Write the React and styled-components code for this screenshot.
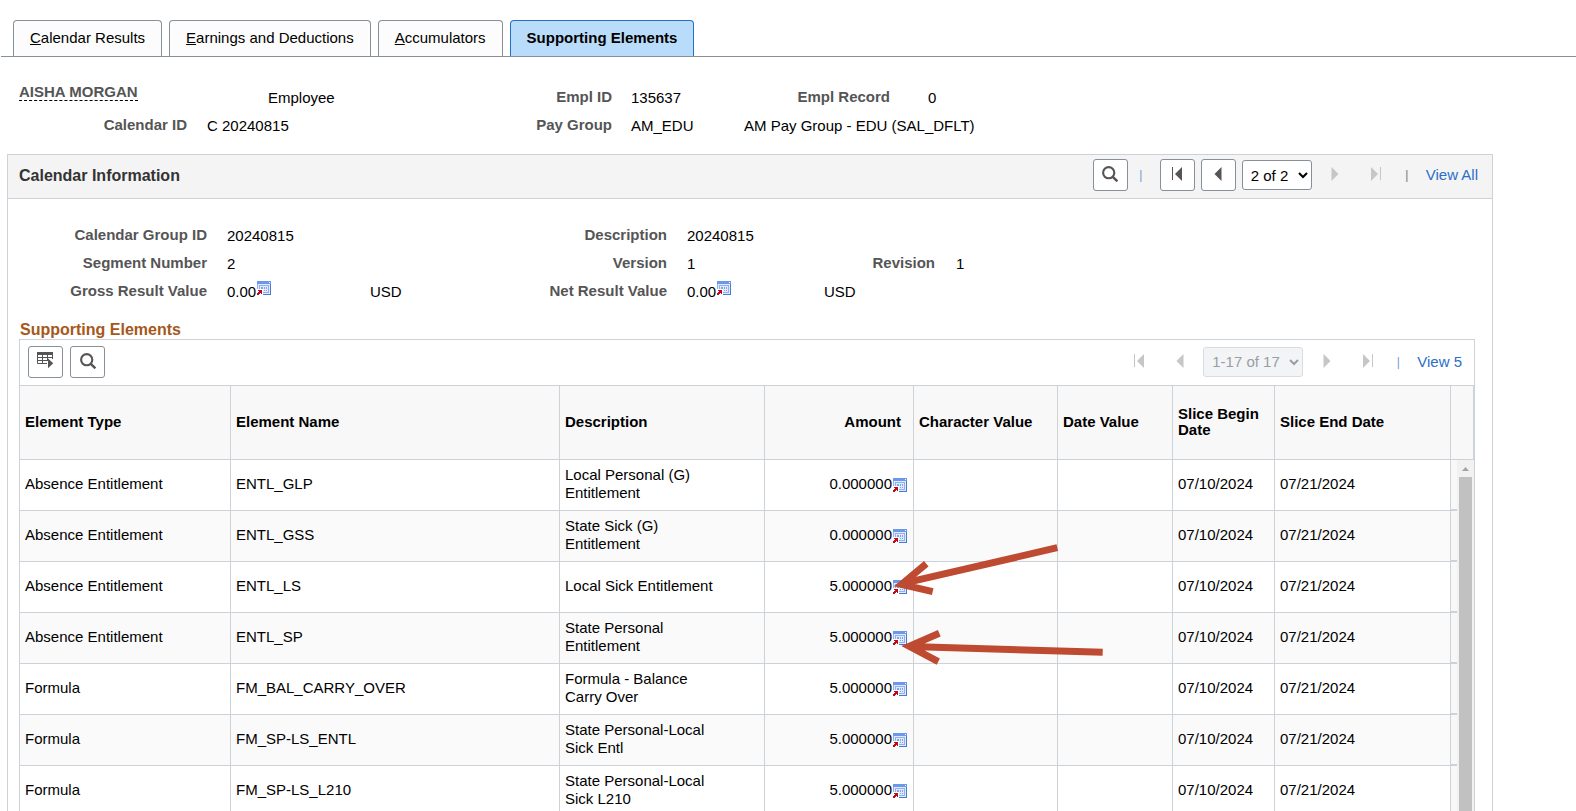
import React from "react";
import styled, { createGlobalStyle, css } from "styled-components";

const GlobalStyle = createGlobalStyle`
  * {
    box-sizing: border-box;
  }
  body {
    margin: 0;
    background: #fff;
    color: #000;
    font: 15px/18px Arial, "Liberation Sans", sans-serif;
  }
  button, select {
    font-family: inherit;
    font-size: 15px;
    color: inherit;
  }
`;

const Page = styled.div`
  height: 100vh;
  overflow: hidden;
  padding-top: 20px;
`;

const Tabs = styled.nav`
  display: flex;
  gap: 7px;
  margin-left: 1px;
  padding-left: 12px;
  border-bottom: 1px solid #878f98;
`;

const Tab = styled.button`
  height: 36px;
  padding: 0 16px 2px;
  border: 1px solid #878f98;
  border-bottom: 0;
  border-radius: 4px 4px 0 0;
  background: #fcfcfc;
  cursor: pointer;

  ${props =>
    props.$active &&
    css`
      background: #badcfb;
      border-color: #2271c8;
      font-weight: bold;
    `}
`;

const FieldGrid = styled.dl`
  display: grid;
  grid-auto-rows: 28px;
  margin: 0;
  white-space: nowrap;
`;

const PersonGrid = styled(FieldGrid)`
  grid-template-columns: 168px 20px 61px 160px 184px 19px 113px 146px 38px auto;
  padding: 26px 0 15px 19px;
`;

const CalendarGrid = styled(FieldGrid)`
  grid-template-columns: 199px 20px 143px 60px 237px 20px 137px 111px 21px auto;
  padding: 22px 0 16px;
`;

const Label = styled.dt`
  grid-column: ${props => props.$col};
  grid-row: ${props => props.$row};
  line-height: 28px;
  text-align: right;
  font-weight: bold;
  color: #555;
`;

const Value = styled.dd`
  grid-column: ${props => props.$col};
  grid-row: ${props => props.$row};
  display: flex;
  align-items: flex-start;
  margin: 0;
  line-height: 30px;

  svg {
    margin-top: 4px;
  }
`;

const Name = styled.dt`
  grid-column: 1;
  grid-row: 1;
  justify-self: start;
  align-self: start;
  line-height: 17px;
  font-weight: bold;
  color: #555;
  border-bottom: 1px dashed #000;
`;

const Panel = styled.section`
  margin: 0 83px 0 7px;
  border: 1px solid #cdd2d9;
`;

const PanelHeader = styled.header`
  display: flex;
  align-items: center;
  justify-content: space-between;
  height: 44px;
  padding: 0 14px 1px 11px;
  background: #f4f4f4;
  border-bottom: 1px solid #cdd2d9;
`;

const PanelTitle = styled.h2`
  margin: 0;
  font-size: 16px;
  color: #333;
`;

const SectionTitle = styled.h3`
  margin: 0 12px;
  font-size: 16px;
  line-height: 18px;
  color: #a6581b;
`;

const GridBox = styled.div`
  position: relative;
  margin: 0 17px 0 11px;
  border: 1px solid #cdd2d9;
`;

const Toolbar = styled.div`
  display: flex;
  align-items: center;
  justify-content: space-between;
  height: 45px;
  padding: 0 12px 0 8px;
`;

const Controls = styled.div`
  display: flex;
  align-items: center;
  gap: ${props => props.$gap || 6}px;
  padding-bottom: 2px;
`;

const IconButton = styled.button`
  display: flex;
  align-items: center;
  justify-content: center;
  width: 35px;
  height: 32px;
  padding: 0 0 2px;
  color: #555;
  background: #fff;
  border: 1px solid #878f98;
  border-radius: 3px;
  cursor: pointer;

  &:disabled {
    color: #c6c6c6;
    background: none;
    border-color: transparent;
    cursor: default;
  }
`;

const Pager = styled.select`
  width: ${props => props.$width}px;
  height: 30px;
  padding: 0 4px;
  background: #fff;
  border: 1px solid #878f98;
  border-radius: 3px;

  &:disabled {
    color: #9a9ea3;
    background: #f3f4f6;
    border-color: #d9dce0;
    opacity: 1;
  }
`;

const Divider = styled.span`
  width: 14px;
  margin-right: 6px;
  text-align: center;
  font-size: 12px;
  color: ${props => props.$color || "#777"};
`;

const ViewLink = styled.a`
  color: #2a6fc9;
  text-decoration: none;
`;

const Table = styled.table`
  width: 100%;
  table-layout: fixed;
  border-collapse: separate;
  border-spacing: 0;
  border-top: 1px solid #cdd2d9;
`;

const Col = styled.col`
  width: ${props => (props.$width ? `${props.$width}px` : "auto")};
`;

const HeadCell = styled.th`
  height: 74px;
  padding: 0 ${props => (props.$right ? 12 : 6)}px 2px 5px;
  background: #f8f8f8;
  border-bottom: 1px solid #cdd2d9;
  border-left: 1px solid #cdd2d9;
  line-height: 16px;
  text-align: ${props => (props.$right ? "right" : "left")};

  &:first-child {
    border-left: 0;
  }
  &:last-child {
    border-right: 1px solid #cdd2d9;
  }
`;

const Cell = styled.td`
  height: 51px;
  padding: 0 6px 2px 5px;
  border-bottom: 1px solid #cdd2d9;
  border-left: 1px solid #cdd2d9;

  &:first-child {
    border-left: 0;
  }
`;

const DescriptionCell = styled(Cell)`
  padding-right: 46px;
`;

const FillerCell = styled(Cell)`
  padding: 0;
  background: #f8f8f8;
  border-bottom-width: 2px;
`;

const Row = styled.tr`
  background: #fff;

  &:nth-child(even) {
    background: #fafafa;
  }
`;

const Amount = styled.span`
  display: flex;
  align-items: center;
  justify-content: flex-end;

  svg {
    margin-top: 2px;
  }
`;

const ScrollCell = styled.td`
  height: 1px;
  padding: 0;
  vertical-align: top;
  background: #f1f1f1;
`;

const ScrollTrack = styled.div`
  display: flex;
  flex-direction: column;
  align-items: center;
  height: 100%;
`;

const ScrollUp = styled.button`
  display: flex;
  align-items: center;
  justify-content: center;
  flex: none;
  width: 17px;
  height: 17px;
  padding: 0;
  border: 0;
  background: none;
  color: #a3a3a3;
`;

const ScrollThumb = styled.div`
  flex: 1;
  width: 13px;
  background: #c1c1c1;
`;

const Annotations = styled.svg`
  position: absolute;
  left: 870px;
  top: 200px;
  pointer-events: none;
`;

const SearchIcon = () => (
  <svg width="16" height="16" viewBox="0 0 16 16" fill="none" stroke="currentColor">
    <circle cx="6.7" cy="6.7" r="5.6" strokeWidth="2.1" />
    <path d="M10.8 10.8l4.6 4.5" strokeWidth="2.5" />
  </svg>
);

const TableIcon = () => (
  <svg width="17" height="17" viewBox="0 0 17 17" fill="none" stroke="currentColor">
    <path d="M0 0h16v3H0z" fill="currentColor" stroke="none" />
    <path d="M.5 3v8.5H10M15.5 3v4M1 5.5h14.5M1 8.5h10M5.5 3v8.5M10.5 3v6" />
    <path d="M11 6.5l5.2 4.8-5.2 5z" fill="currentColor" stroke="none" />
  </svg>
);

const arrows = {
  first: { box: 10, bar: "M.5 1v13", head: "M10 1v14L3 8z" },
  prev: { box: 8, head: "M7.5 1v14L.5 8z" },
  next: { box: 8, head: "M.5 1v14L7.5 8z" },
  last: { box: 10, bar: "M9.5 1v13", head: "M0 1v14l7-7z" }
};

const ArrowIcon = ({ type }) => {
  const { box, bar, head } = arrows[type];
  return (
    <svg width={box} height="16" viewBox={`0 0 ${box} 16`}>
      {bar && <path d={bar} stroke="currentColor" />}
      <path d={head} fill="currentColor" />
    </svg>
  );
};

const DetailIcon = () => (
  <svg width="15" height="14" viewBox="-1 0 15 14" shapeRendering="crispEdges">
    <path d="M0 0h14v14H6V8H0z" fill="#8fb1f2" />
    <path d="M0 0h14v3H0z" fill="#6d97e8" />
    <path d="M12 1h1v1h-1z" fill="#fff" />
    <path d="M1 3h12v10H6V8H1z" fill="#dfeafd" />
    <path d="M2 4h10v1H2zM2 4h1v4H2zM11 4h1v8h-1zM6 11h6v1H6z" fill="#8fb1f2" />
    <path d="M4 6h2v2H4zM7 6h1v2H7zM9 6h1v2H9zM7 9h1v1H7zM9 9h1v1H9z" fill="#7fa3ec" />
    <path d="M13 3h1v11H6v-1h7z" fill="#4c78cf" />
    <path d="M1 9h4v4H4v-1H3v1H2v1H0v-2h1v-1h1v-1H1z" fill="#c00a12" />
  </svg>
);

const NavButton = ({ type, label, disabled }) => (
  <IconButton aria-label={label} disabled={disabled}>
    <ArrowIcon type={type} />
  </IconButton>
);

const columns = [
  { title: "Element Type", width: 210 },
  { title: "Element Name", width: 329 },
  { title: "Description", width: 205 },
  { title: "Amount", width: 149, right: true },
  { title: "Character Value", width: 144 },
  { title: "Date Value", width: 115 },
  { title: "Slice Begin Date", width: 102 },
  { title: "Slice End Date" }
];

const elements = [
  ["Absence Entitlement", "ENTL_GLP", "Local Personal (G) Entitlement", "0.000000"],
  ["Absence Entitlement", "ENTL_GSS", "State Sick (G) Entitlement", "0.000000"],
  ["Absence Entitlement", "ENTL_LS", "Local Sick Entitlement", "5.000000"],
  ["Absence Entitlement", "ENTL_SP", "State Personal Entitlement", "5.000000"],
  ["Formula", "FM_BAL_CARRY_OVER", "Formula - Balance Carry Over", "5.000000"],
  ["Formula", "FM_SP-LS_ENTL", "State Personal-Local Sick Entl", "5.000000"],
  ["Formula", "FM_SP-LS_L210", "State Personal-Local Sick L210", "5.000000"]
];

const PersonInfo = () => (
  <PersonGrid>
    <Name>AISHA MORGAN</Name>
    <Value $col="4" $row="1">Employee</Value>
    <Label $col="5" $row="1">Empl ID</Label>
    <Value $col="7" $row="1">135637</Value>
    <Label $col="8" $row="1">Empl Record</Label>
    <Value $col="10" $row="1">0</Value>
    <Label $col="1" $row="2">Calendar ID</Label>
    <Value $col="3" $row="2">C 20240815</Value>
    <Label $col="5" $row="2">Pay Group</Label>
    <Value $col="7" $row="2">AM_EDU</Value>
    <Value $col="8" $row="2">AM Pay Group - EDU (SAL_DFLT)</Value>
  </PersonGrid>
);

const CalendarInfo = () => (
  <CalendarGrid>
    <Label $col="1" $row="1">Calendar Group ID</Label>
    <Value $col="3" $row="1">20240815</Value>
    <Label $col="5" $row="1">Description</Label>
    <Value $col="7" $row="1">20240815</Value>
    <Label $col="1" $row="2">Segment Number</Label>
    <Value $col="3" $row="2">2</Value>
    <Label $col="5" $row="2">Version</Label>
    <Value $col="7" $row="2">1</Value>
    <Label $col="8" $row="2">Revision</Label>
    <Value $col="10" $row="2">1</Value>
    <Label $col="1" $row="3">Gross Result Value</Label>
    <Value $col="3" $row="3">
      0.00
      <DetailIcon />
    </Value>
    <Value $col="4" $row="3">USD</Value>
    <Label $col="5" $row="3">Net Result Value</Label>
    <Value $col="7" $row="3">
      0.00
      <DetailIcon />
    </Value>
    <Value $col="8" $row="3">USD</Value>
  </CalendarGrid>
);

const ElementsTable = () => (
  <Table>
    <colgroup>
      {columns.map(col => (
        <Col key={col.title} $width={col.width} />
      ))}
      <Col $width={7} />
      <Col $width={17} />
    </colgroup>
    <thead>
      <tr>
        {columns.map(col => (
          <HeadCell key={col.title} $right={col.right} scope="col">
            {col.title}
          </HeadCell>
        ))}
        <HeadCell as="td" colSpan={2} />
      </tr>
    </thead>
    <tbody>
      {elements.map(([type, name, description, amount], index) => (
        <Row key={name}>
          <Cell>{type}</Cell>
          <Cell>{name}</Cell>
          <DescriptionCell>{description}</DescriptionCell>
          <Cell>
            <Amount>
              {amount}
              <DetailIcon />
            </Amount>
          </Cell>
          <Cell />
          <Cell />
          <Cell>07/10/2024</Cell>
          <Cell>07/21/2024</Cell>
          <FillerCell />
          {index === 0 && (
            <ScrollCell rowSpan={elements.length}>
              <ScrollTrack>
                <ScrollUp aria-label="Scroll up">
                  <svg width="7" height="4" viewBox="0 0 7 4">
                    <path d="M0 4h7L3.5 0z" fill="currentColor" />
                  </svg>
                </ScrollUp>
                <ScrollThumb />
              </ScrollTrack>
            </ScrollCell>
          )}
        </Row>
      ))}
    </tbody>
  </Table>
);

const App = () => (
  <Page>
    <GlobalStyle />
    <Tabs>
      <Tab>
        <u>C</u>alendar Results
      </Tab>
      <Tab>
        <u>E</u>arnings and Deductions
      </Tab>
      <Tab>
        <u>A</u>ccumulators
      </Tab>
      <Tab $active>Supporting Elements</Tab>
    </Tabs>
    <PersonInfo />
    <Panel>
      <PanelHeader>
        <PanelTitle>Calendar Information</PanelTitle>
        <Controls>
          <IconButton aria-label="Find">
            <SearchIcon />
          </IconButton>
          <Divider $color="#6f9bd0">|</Divider>
          <NavButton type="first" label="First" />
          <NavButton type="prev" label="Previous" />
          <Pager $width={70} aria-label="Calendar row">
            <option>2 of 2</option>
          </Pager>
          <NavButton type="next" label="Next" disabled />
          <NavButton type="last" label="Last" disabled />
          <Divider>|</Divider>
          <ViewLink href="#all">View All</ViewLink>
        </Controls>
      </PanelHeader>
      <CalendarInfo />
      <SectionTitle>Supporting Elements</SectionTitle>
      <GridBox>
        <Toolbar>
          <Controls $gap={7}>
            <IconButton aria-label="Grid actions">
              <TableIcon />
            </IconButton>
            <IconButton aria-label="Find in grid">
              <SearchIcon />
            </IconButton>
          </Controls>
          <Controls>
            <NavButton type="first" label="First rows" disabled />
            <NavButton type="prev" label="Previous rows" disabled />
            <Pager $width={100} aria-label="Element rows" disabled>
              <option>1-17 of 17</option>
            </Pager>
            <NavButton type="next" label="Next rows" disabled />
            <NavButton type="last" label="Last rows" disabled />
            <Divider $color="#6f9bd0">|</Divider>
            <ViewLink href="#view5">View 5</ViewLink>
          </Controls>
        </Toolbar>
        <ElementsTable />
        <Annotations width="220" height="130" viewBox="0 0 220 130" fill="none" stroke="#be4a31" strokeWidth="7">
          <path d="M36.3 23.7L11.5 44.4l31.2 7.3M167.3 7.7L13 43.4" />
          <path d="M49.3 93.3l-30 13 29 15.4M212.7 112.3L20 106.4" />
        </Annotations>
      </GridBox>
    </Panel>
  </Page>
);

export default App;
